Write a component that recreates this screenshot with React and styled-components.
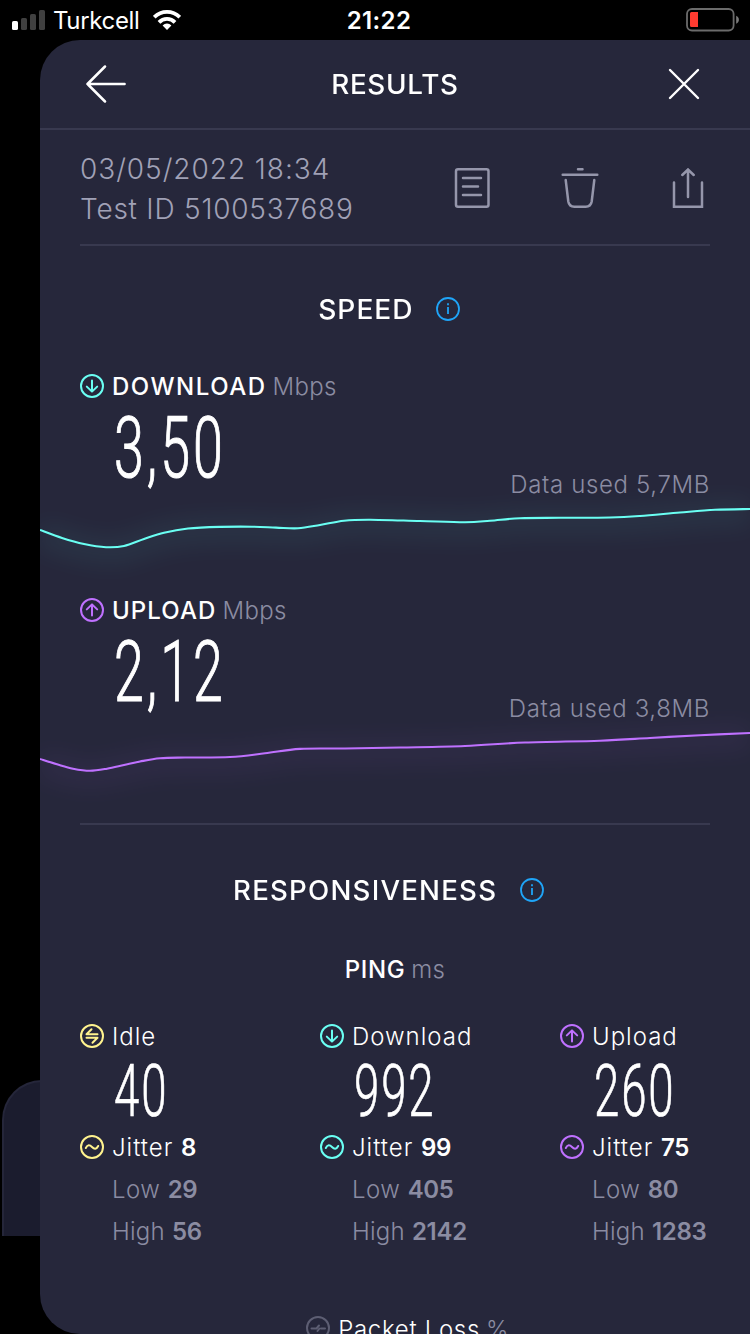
import React from "react";
import styled, { createGlobalStyle } from "styled-components";

const CYAN = "#6afff3";
const PURPLE = "#bf71ff";
const YELLOW = "#fff38e";

const downloadPoints = [
    [0, 32], [22, 40], [44, 46], [66, 49.2], [84, 48], [104, 41], [124, 34.7], [148, 30.5], [180, 28.9],
    [212, 28.7], [236, 29.6], [258, 30.3], [280, 27], [304, 22.7], [330, 21.7], [380, 23], [425, 24.2],
    [450, 22.8], [480, 20.2], [520, 19.8], [570, 19.5], [600, 18], [640, 14.5], [675, 11.8], [710, 11],
];

const uploadPoints = [
    [0, 37], [17, 42.3], [33, 46.7], [50, 48.8], [67, 46.7], [84, 43], [100, 39.5], [120, 36.3],
    [145, 35.5], [190, 35], [225, 31.3], [260, 26.9], [305, 26.5], [360, 25.5], [425, 24],
    [485, 20.5], [560, 18.7], [610, 16], [660, 13.2], [710, 11],
];

const responses = [
    { name: "Idle", icon: "idle", color: YELLOW, ping: "40", jitter: "8", low: "29", high: "56" },
    { name: "Download", icon: "down", color: CYAN, ping: "992", jitter: "99", low: "405", high: "2142" },
    { name: "Upload", icon: "up", color: PURPLE, ping: "260", jitter: "75", low: "80", high: "1283" },
];

const glyphs = {
    down: "M12 6.5v11M6.8 12.6l5.2 5 5.2-5",
    up: "M12 17.5v-11M6.8 11.4l5.2-5 5.2 5",
    idle: "M17.5 10.2H6.5l5-5M6.5 13.8h11l-5 5",
    jitter: "M5.8 13c1.8-3.6 4-3.2 6.2-1s4.4 2.6 6.2-1",
    loss: "M5.5 12.5h5l2.5-3M11.5 15l2-2.5M15 12.5h4",
};

const CircleIcon = ({ type, color }) => (
    <svg width="24" height="24" viewBox="0 0 24 24" fill="none" stroke={color} strokeWidth="2" strokeLinecap="round" strokeLinejoin="round">
        <circle cx="12" cy="12" r="11" />
        <path d={glyphs[type]} />
    </svg>
);

const InfoIcon = () => (
    <svg width="24" height="24" viewBox="0 0 24 24" fill="none" stroke="#1fa5f8" strokeWidth="1.8">
        <circle cx="12" cy="12" r="11" />
        <path d="M12 10v7M12 6.2v2" />
    </svg>
);

// smooth line through all the samples
const toPath = (pts) => {
    let d = `M${pts[0][0]} ${pts[0][1]}`;
    for (let i = 0; i < pts.length - 1; i++) {
        const p0 = pts[i - 1] || pts[i];
        const p1 = pts[i];
        const p2 = pts[i + 1];
        const p3 = pts[i + 2] || p2;
        d += `C${p1[0] + (p2[0] - p0[0]) / 6} ${p1[1] + (p2[1] - p0[1]) / 6} ${p2[0] - (p3[0] - p1[0]) / 6} ${p2[1] - (p3[1] - p1[1]) / 6} ${p2[0]} ${p2[1]}`;
    }
    return d;
};

const Graph = ({ points, color, id }) => (
    <GraphSvg viewBox="0 0 710 100">
        <filter id={id} x="-10%" y="-100%" width="120%" height="400%" colorInterpolationFilters="sRGB">
            <feGaussianBlur stdDeviation="11" />
        </filter>
        <path d={toPath(points)} transform="translate(0 4)" stroke={color} strokeWidth="28" opacity="0.05" filter={`url(#${id})`} />
        <path d={toPath(points)} stroke={color} strokeWidth="2.1" />
    </GraphSvg>
);

const Speed = ({ label, icon, color, value, used, points, track }) => (
    <SpeedBlock>
        <LabelRow>
            <CircleIcon type={icon} color={color} />
            <Label $track={track}>{label}</Label>
            <Unit>Mbps</Unit>
        </LabelRow>
        <ValueRow>
            <BigValue>{value}</BigValue>
            <DataUsed>Data used {used}</DataUsed>
        </ValueRow>
        <Graph points={points} color={color} id={`glow-${icon}`} />
    </SpeedBlock>
);

const App = () => {
    return (
        <Screen>
            <GlobalStyle />
            <StatusBar>
                <Carrier>
                    <svg width="33" height="20" viewBox="0 0 33 20">
                        <rect x="0" y="11" width="6" height="9" rx="1.6" fill="#fff" />
                        <rect x="9" y="8" width="6" height="12" rx="1.6" fill="#404040" />
                        <rect x="18" y="4" width="6" height="16" rx="1.6" fill="#404040" />
                        <rect x="27" y="0" width="6" height="20" rx="1.6" fill="#404040" />
                    </svg>
                    <CarrierName>Turkcell</CarrierName>
                    <svg width="28" height="20" viewBox="0 0 28 20" fill="none" stroke="#fff" strokeWidth="3.8">
                        <path d="M1.2 7.2a18.2 18.2 0 0 1 25.6 0" />
                        <path d="M6 12.3a11.2 11.2 0 0 1 16 0" />
                        <path d="M14 20l-4.4-4.6a6.3 6.3 0 0 1 8.8 0z" fill="#fff" stroke="none" />
                    </svg>
                </Carrier>
                <Time>21:22</Time>
                <Battery width="54" height="24" viewBox="0 0 54 24">
                    <rect x="1" y="1" width="46.6" height="21.5" rx="5" fill="none" stroke="#6b6b6b" strokeWidth="1.8" />
                    <path d="M5.5 4H12v15H5.5A1.5 1.5 0 0 1 4 17.5v-12A1.5 1.5 0 0 1 5.5 4z" fill="#ff3b30" />
                    <path d="M50.2 7.8c3.6 1.5 3.6 6.5 0 8z" fill="#7b7b7b" />
                </Battery>
            </StatusBar>
            <BackCard />
            <Panel>
                <Header>
                    <svg width="40" height="40" viewBox="0 0 40 40" fill="none" stroke="#fff" strokeWidth="2.5" strokeLinecap="round" strokeLinejoin="round">
                        <path d="M38.6 20H1.5M19 2.5L1.5 20L19 37.5" />
                    </svg>
                    <Title $track="0.7px" $stretch={1.03}>RESULTS</Title>
                    <Close width="32" height="32" viewBox="0 0 32 32" stroke="#fff" strokeWidth="2.4" strokeLinecap="round">
                        <path d="M2 2l28 28M30 2L2 30" />
                    </Close>
                </Header>
                <Meta>
                    <TestInfo>
                        <InfoLine $track="0.95px">03/05/2022 18:34</InfoLine>
                        <InfoLine $track="0.77px">Test ID 5100537689</InfoLine>
                    </TestInfo>
                    <Actions>
                        <svg viewBox="0 0 40 40">
                            <rect x="4" y="1.3" width="32.5" height="37.4" rx="2" />
                            <path d="M11 10h18M11 18.5h15M11 27h18" />
                        </svg>
                        <svg viewBox="0 0 40 40">
                            <path d="M18 1.3h4.5M2.7 6.8h34.6M5.7 12l2.6 21.500q.9 5.200 6 5.200h11.400q5.100 0 6-5.200L34.300 12" />
                        </svg>
                        <svg viewBox="0 0 40 40">
                            <path d="M6 14.500v24.200h28V14.500M20 29V1.500M14.300 7L20 1.500L25.700 7" />
                        </svg>
                    </Actions>
                </Meta>
                <SectionHead>
                    <Title $track="1px" $stretch={1.04}>SPEED</Title>
                    <InfoIcon />
                </SectionHead>
                <Speed label="DOWNLOAD" icon="down" color={CYAN} value="3,50" used="5,7MB" points={downloadPoints} track="1.5px" />
                <Speed label="UPLOAD" icon="up" color={PURPLE} value="2,12" used="3,8MB" points={uploadPoints} track="1.1px" />
                <Divider />
                <SectionHead>
                    <Title $track="1.2px" $stretch={1.023}>RESPONSIVENESS</Title>
                    <InfoIcon />
                </SectionHead>
                <PingHead>
                    <Label $track="0.6px">PING</Label>
                    <Unit>ms</Unit>
                </PingHead>
                <Columns>
                    {responses.map((r) => (
                        <div key={r.name}>
                            <LabelRow>
                                <CircleIcon type={r.icon} color={r.color} />
                                <Text>{r.name}</Text>
                            </LabelRow>
                            <Ping>{r.ping}</Ping>
                            <LabelRow>
                                <CircleIcon type="jitter" color={r.color} />
                                <Text>Jitter <b>{r.jitter}</b></Text>
                            </LabelRow>
                            <Range>
                                <RangeLine $track="0.5px">Low <b>{r.low}</b></RangeLine>
                                <RangeLine $track="0.25px">High <b>{r.high}</b></RangeLine>
                            </Range>
                        </div>
                    ))}
                </Columns>
                <PacketLoss>
                    <CircleIcon type="loss" color="#5d5e73" />
                    <Text>Packet Loss</Text>
                    <Unit>%</Unit>
                </PacketLoss>
            </Panel>
        </Screen>
    );
};

const GlobalStyle = createGlobalStyle`
  * {
    box-sizing: border-box;
  }
  body {
    margin: 0;
    background: #000;
  }
  svg {
    display: block;
    flex: none;
  }
`;

const Screen = styled.main`
  position: relative;
  width: 750px;
  height: 1334px;
  overflow: hidden;
  background: #000;
  color: #fff;
  font-family: Inter, "Liberation Sans", sans-serif;
  font-size: 24px;
  white-space: nowrap;
`;

const StatusBar = styled.div`
  display: grid;
  grid-template-columns: 1fr auto 1fr;
  align-items: center;
  height: 40px;
  padding: 0 4px 0 12px;
`;

const Carrier = styled.div`
  display: flex;
  align-items: center;
`;

const CarrierName = styled.span`
  margin: 0 13px 0 8px;
  padding-top: 1px;
  font-weight: 400;
  letter-spacing: -0.35px;
`;

const Time = styled.span`
  padding-top: 1px;
  font-weight: 600;
  letter-spacing: 0.4px;
`;

const Battery = styled.svg`
  justify-self: end;
  margin-right: 6px;
`;

/* previous screen peeking out from behind the panel */
const BackCard = styled.div`
  position: absolute;
  left: 2px;
  top: 1080px;
  width: 80px;
  height: 156px;
  background: #1b1c2e;
  border: 2px solid #25263a;
  border-bottom: none;
  border-radius: 40px 0 0 0;
`;

const Panel = styled.section`
  position: relative;
  height: 1294px;
  margin-left: 40px;
  overflow: hidden;
  background: #26273b;
  border-radius: 40px 0 0 40px;
`;

const Header = styled.header`
  display: grid;
  grid-template-columns: 1fr auto 1fr;
  align-items: center;
  height: 90px;
  padding: 0 48px 0 46px;
  border-bottom: 2px solid #38394f;
`;

const Close = styled.svg`
  justify-self: end;
  margin-right: 2px;
`;

const Title = styled.h2`
  margin: 0 -1px 0 0;
  padding-top: 2px;
  font-size: 27px;
  font-weight: 500;
  line-height: 38px;
  letter-spacing: ${(p) => p.$track};
  transform: scaleX(${(p) => p.$stretch});
`;

const Meta = styled.div`
  display: flex;
  justify-content: space-between;
  height: 116px;
  margin: 0 40px;
  padding-top: 18px;
  border-bottom: 2px solid #38394f;
`;

const TestInfo = styled.div`
  padding-top: 1px;
  color: #a0a1b6;
`;

const InfoLine = styled.div`
  font-size: 28px;
  font-weight: 320;
  line-height: 40px;
  letter-spacing: ${(p) => p.$track};
`;

const Actions = styled.div`
  display: flex;
  gap: 68px;
  margin: 20px 2px 0 0;

  svg {
    width: 40px;
    height: 40px;
    fill: none;
    stroke: #9596ab;
    stroke-width: 2.5;
    stroke-linecap: round;
  }
`;

const SectionHead = styled.div`
  display: flex;
  align-items: center;
  justify-content: center;
  gap: 26px;
  padding: 43px 10px 0 0;
  margin-bottom: 45px;
`;

const SpeedBlock = styled.div`
  height: 224px;
`;

const LabelRow = styled.div`
  display: flex;
  align-items: center;
  height: 24px;
  line-height: 24px;

  ${SpeedBlock} & {
    padding-left: 40px;
  }
`;

const Label = styled.span`
  margin-left: 8px;
  padding-top: 2px;
  font-weight: 500;
  letter-spacing: ${(p) => p.$track};
`;

const Unit = styled.span`
  margin-left: 6px;
  padding-top: 2px;
  color: #8b8ca2;
  font-weight: 300;
  letter-spacing: 0.3px;
`;

const ValueRow = styled.div`
  display: flex;
  align-items: flex-end;
  justify-content: space-between;
  height: 100px;
  padding: 0 40px 0 74px;
`;

const BigValue = styled.div`
  width: 120px;
  font-family: Roboto, sans-serif;
  font-size: 86px;
  font-weight: 300;
  line-height: 100px;
  letter-spacing: 4.8px;
  -webkit-text-stroke: 1.1px #fff;
  transform: scaleX(0.625);
  transform-origin: 0 50%;
`;

const DataUsed = styled.div`
  color: #8b8ca2;
  font-weight: 300;
  line-height: 26px;
  letter-spacing: 0.65px;
`;

const GraphSvg = styled.svg`
  width: 710px;
  height: 100px;
  fill: none;
  overflow: visible;
`;

const Divider = styled.div`
  height: 2px;
  margin: 1px 40px 2px;
  background: #38394f;
`;

const PingHead = styled.div`
  display: flex;
  justify-content: center;
  height: 24px;
  margin-top: 48px;
  line-height: 24px;

  ${Label} {
    margin-left: 0;
  }
  ${Label}, ${Unit} {
    padding-top: 0;
  }
`;

const Columns = styled.div`
  display: grid;
  grid-template-columns: repeat(3, 240px);
  padding: 42px 0 0 40px;
`;

const Ping = styled.div`
  padding-left: 34px;
  font-family: Roboto, sans-serif;
  font-size: 73px;
  font-weight: 300;
  line-height: 87px;
  letter-spacing: 3px;
  -webkit-text-stroke: 0.7px #fff;
  transform: scaleX(0.625);
  transform-origin: 34px 50%;
`;

const Text = styled.span`
  margin-left: 8px;
  padding-top: 2px;
  font-weight: 300;
  letter-spacing: 1px;

  b {
    font-weight: 600;
    letter-spacing: -0.3px;
  }
`;

const Range = styled.div`
  margin-top: 10px;
  padding-left: 32px;
`;

const RangeLine = styled.div`
  color: #8b8ca2;
  font-weight: 300;
  line-height: 42px;
  letter-spacing: ${(p) => p.$track};

  b {
    font-weight: 600;
    letter-spacing: -0.3px;
  }
`;

const PacketLoss = styled.div`
  display: flex;
  align-items: center;
  justify-content: center;
  height: 24px;
  margin-top: 63px;
  padding-left: 25px;

  ${Text} {
    letter-spacing: 0.7px;
  }
`;

export default App;
